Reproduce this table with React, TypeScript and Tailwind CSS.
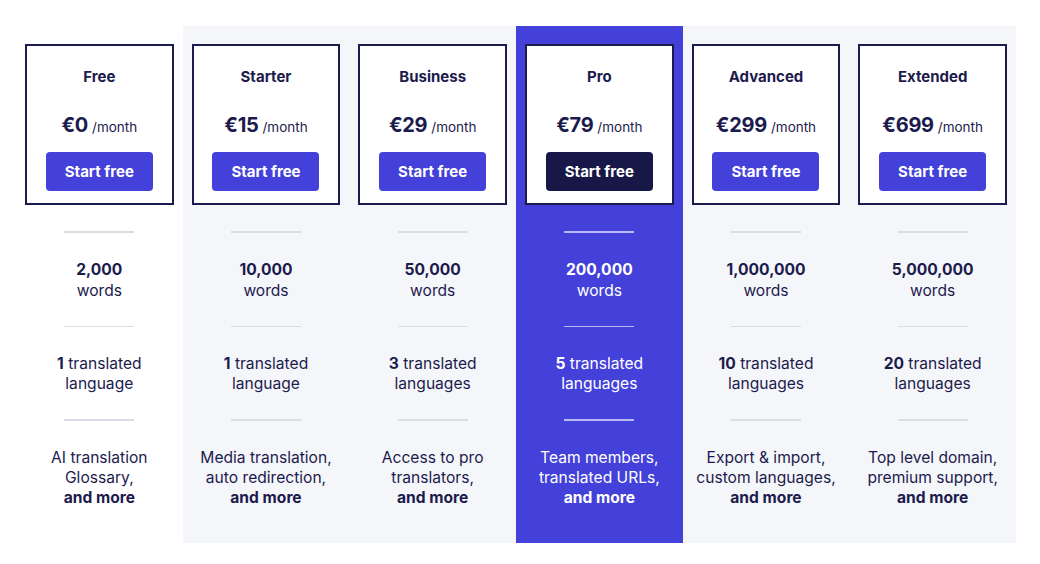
import React from "react";

type Plan = {
  name: string;
  price: string;
  words: string;
  langNum: string;
  langLabel: string;
  features: [string, string];
};

const plans: Plan[] = [
  { name: "Free", price: "€0", words: "2,000", langNum: "1", langLabel: "language", features: ["AI translation", "Glossary,"] },
  { name: "Starter", price: "€15", words: "10,000", langNum: "1", langLabel: "language", features: ["Media translation,", "auto redirection,"] },
  { name: "Business", price: "€29", words: "50,000", langNum: "3", langLabel: "languages", features: ["Access to pro", "translators,"] },
  { name: "Pro", price: "€79", words: "200,000", langNum: "5", langLabel: "languages", features: ["Team members,", "translated URLs,"] },
  { name: "Advanced", price: "€299", words: "1,000,000", langNum: "10", langLabel: "languages", features: ["Export & import,", "custom languages,"] },
  { name: "Extended", price: "€699", words: "5,000,000", langNum: "20", langLabel: "languages", features: ["Top level domain,", "premium support,"] },
];

function Column({ plan, index }: { plan: Plan; index: number }) {
  const pro = plan.name === "Pro";
  const bg = index === 0 ? "bg-white" : pro ? "bg-[#4341d9]" : "bg-[#f5f6fa]";
  const text = pro ? "text-white" : "text-[#1c1b4d]";
  const divider = pro ? "bg-[#b9b8f0]" : "bg-[#dcdde4]";
  return (
    <div className={`flex flex-col items-center pt-[18px] px-[9px] pb-[35px] ${bg}`}>
      <div className="w-full h-[161px] border-2 border-[#1c1b4d] bg-white flex flex-col items-center pt-[21px] text-[#1c1b4d]">
        <div className="text-[15px] leading-[20px] font-bold">{plan.name}</div>
        <div className="mt-[23px] h-[28px] flex items-baseline">
          <span className="text-[20px] font-bold tracking-[-0.3px]">{plan.price}</span>
          <span className="text-[13.5px] ml-[4px]">/month</span>
        </div>
        <button
          className={`mt-[14px] w-[107px] h-[39px] pt-[2px] rounded-[4px] text-white text-[15px] font-bold ${
            pro ? "bg-[#181848]" : "bg-[#4341d9]"
          }`}
        >
          Start free
        </button>
      </div>
      <div className={`mt-[26px] w-[70px] h-[1.5px] ${divider}`} />
      <div className={`mt-[26px] text-center text-[15.6px] leading-[21px] ${text}`}>
        <div className="font-bold">{plan.words}</div>
        <div>words</div>
      </div>
      <div className={`mt-[25px] w-[70px] h-[1.5px] ${divider}`} />
      <div className={`mt-[27px] text-center text-[15.6px] leading-[20px] ${text}`}>
        <div>
          <span className="font-bold">{plan.langNum}</span> translated
        </div>
        <div>{plan.langLabel}</div>
      </div>
      <div className={`mt-[25px] w-[70px] h-[1.5px] ${divider}`} />
      <div className={`mt-[27px] text-center text-[15.6px] leading-[20px] ${text}`}>
        <div className="whitespace-nowrap">{plan.features[0]}</div>
        <div className="whitespace-nowrap">{plan.features[1]}</div>
        <div className="font-bold">and more</div>
      </div>
    </div>
  );
}

export default function App() {
  return (
    <div
      className="w-[1040px] h-[564px] bg-white pt-[26px] pl-[16px]"
      style={{ fontFamily: "Inter, 'Noto Sans', sans-serif" }}
    >
      <div className="grid grid-cols-6 w-[1000px]">
        {plans.map((p, i) => (
          <Column key={p.name} plan={p} index={i} />
        ))}
      </div>
    </div>
  );
}
